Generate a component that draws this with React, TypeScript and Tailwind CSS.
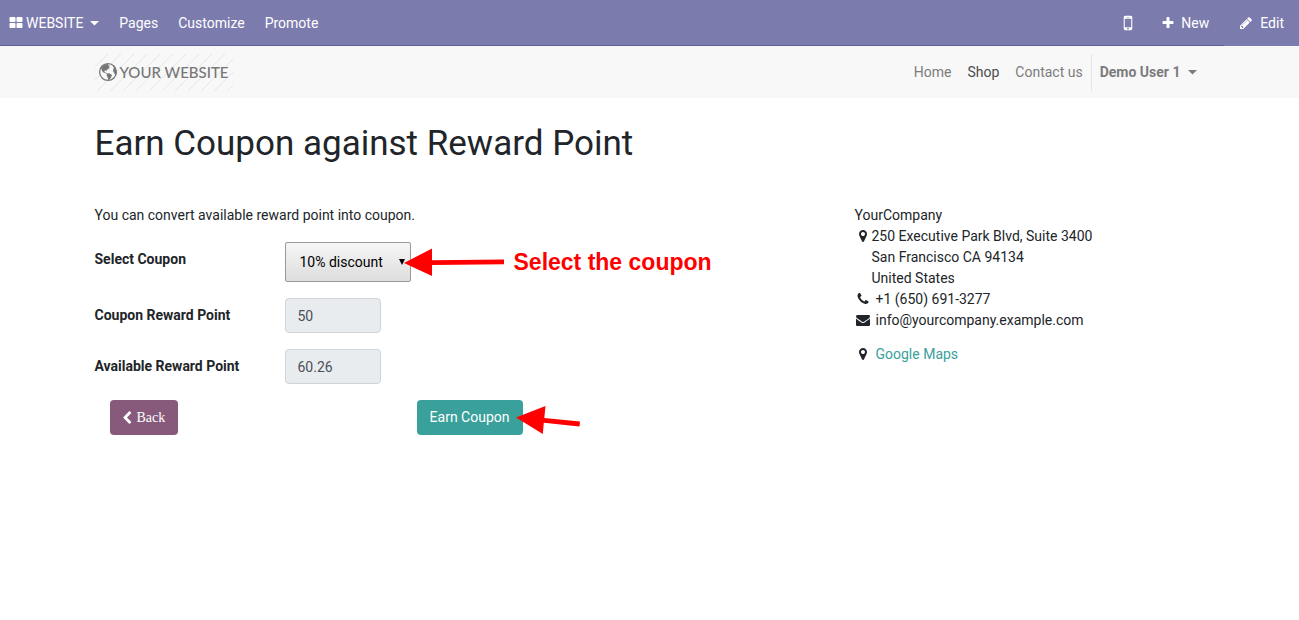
import React from "react";

const ICONS = {
  thLarge:
    "M832 1024v384q0 52-38 90t-90 38h-512q-52 0-90-38t-38-90v-384q0-52 38-90t90-38h512q52 0 90 38t38 90zm0-768v384q0 52-38 90t-90 38h-512q-52 0-90-38t-38-90v-384q0-52 38-90t90-38h512q52 0 90 38t38 90zm896 768v384q0 52-38 90t-90 38h-512q-52 0-90-38t-38-90v-384q0-52 38-90t90-38h512q52 0 90 38t38 90zm0-768v384q0 52-38 90t-90 38h-512q-52 0-90-38t-38-90v-384q0-52 38-90t90-38h512q52 0 90 38t38 90z",
  mobile:
    "M976 1408q0-33-23.5-56.5t-56.5-23.5-56.5 23.5-23.5 56.5 23.5 56.5 56.5 23.5 56.5-23.5 23.5-56.5zm208-160v-704q0-13-9.5-22.5t-22.5-9.5h-512q-13 0-22.5 9.5t-9.5 22.5v704q0 13 9.5 22.5t22.5 9.5h512q13 0 22.5-9.5t9.5-22.5zm-192-848q0-16-16-16h-160q-16 0-16 16t16 16h160q16 0 16-16zm288-16v1024q0 52-38 90t-90 38h-512q-52 0-90-38t-38-90v-1024q0-52 38-90t90-38h512q52 0 90 38t38 90z",
  plus: "M1600 736v192q0 40-28 68t-68 28h-416v416q0 40-28 68t-68 28h-192q-40 0-68-28t-28-68v-416h-416q-40 0-68-28t-28-68v-192q0-40 28-68t68-28h416v-416q0-40 28-68t68-28h192q40 0 68 28t28 68v416h416q40 0 68 28t28 68z",
  pencil:
    "M491 1536l91-91-235-235-91 91v107h128v128h107zm523-928q0-22-22-22-10 0-17 7l-542 542q-7 7-7 17 0 22 22 22 10 0 17-7l542-542q7-7 7-17zm-54-192l416 416-832 832h-416v-416zm683 96q0 53-37 90l-166 166-416-416 166-165q36-38 90-38 53 0 91 38l235 234q37 39 37 91z",
  marker:
    "M1152 640q0-106-75-181t-181-75-181 75-75 181 75 181 181 75 181-75 75-181zm256 0q0 109-33 179l-364 774q-16 33-47.5 52t-67.5 19-67.5-19-46.5-52l-365-774q-33-70-33-179 0-212 150-362t362-150 362 150 150 362z",
  phone:
    "M1600 1240q0 27-10 70.5t-21 68.5q-21 50-122 106-94 51-186 51-27 0-53-3.5t-57.5-12.5-47-14.5-55.5-20.5-49-18q-98-35-175-83-127-79-264-216t-216-264q-48-77-83-175-3-9-18-49t-20.5-55.5-14.5-47-12.5-57.5-3.5-53q0-92 51-186 56-101 106-122 25-11 68.5-21t70.5-10q14 0 21 3 18 6 53 76 11 19 30 54t35 63.5 31 53.5q3 4 17.5 25t21.5 35.5 7 28.5q0 20-28.5 50t-62 55-62 53-28.5 46q0 9 5 22.5t8.5 20.5 14 24 11.5 19q76 137 174 235t235 174q2 1 19 11.5t24 14 20.5 8.5 22.5 5q18 0 46-28.5t53-62 55-62 50-28.5q14 0 28.5 7t35.5 21.5 25 17.5q25 15 53.5 31t63.5 35 54 30q70 35 76 53 3 7 3 21z",
  envelope:
    "M1792 710v794q0 66-47 113t-113 47h-1472q-66 0-113-47t-47-113v-794q44 49 101 87 362 246 497 345 57 42 92.5 65.5t94.5 48 110 24.5h2q51 0 110-24.5t94.5-48 92.5-65.5q170-123 498-345 57-39 100-87zm0-294q0 79-49 151t-122 123q-376 261-468 325-10 7-42.5 31t-54 38.5-52 32.5-57.5 27-50 9h-2q-23 0-50-9t-57.5-27-52-32.5-54-38.5-42.5-31q-91-64-262-182.5t-205-142.5q-62-42-117-115.5t-55-136.5q0-78 41.5-130t118.5-52h1472q65 0 112.5 47t47.5 113z",
  chevronLeft:
    "M1427 301l-531 531 531 531q19 19 19 45t-19 45l-166 166q-19 19-45 19t-45-19l-742-742q-19-19-19-45t19-45l742-742q19-19 45-19t45 19l166 166q19 19 19 45t-19 45z",
};

function Icon({ name, className = "size-3.5" }: { name: keyof typeof ICONS; className?: string }) {
  return (
    <svg viewBox="0 0 1792 1792" fill="currentColor" aria-hidden="true" className={`shrink-0 ${className}`}>
      <path d={ICONS[name]} />
    </svg>
  );
}

function Caret() {
  return (
    <svg viewBox="0 0 9 5" fill="currentColor" aria-hidden="true" className="h-[5px] w-[9px] shrink-0">
      <path d="M0 0h9L4.5 4.6z" />
    </svg>
  );
}

function AdminBar() {
  return (
    <nav className="flex h-[46px] justify-between bg-[#7c7bad] text-white">
      <div className="flex grow items-center border-b border-[#5f5e97] pt-px">
        <button className="flex items-center pr-2.5 pl-[9px]">
          <Icon name="thLarge" className="mr-[3px] size-3.5" />
          WEBSITE
          <span className="ml-[7px]">
            <Caret />
          </span>
        </button>
        <a href="#pages" className="px-2.5">Pages</a>
        <a href="#customize" className="px-2.5">Customize</a>
        <a href="#promote" className="px-2.5">Promote</a>
        <div className="ml-auto flex items-center">
          <button aria-label="Mobile preview" className="px-2">
            <Icon name="mobile" className="size-5" />
          </button>
          <button className="flex items-center gap-1.5 px-[15px]">
            <Icon name="plus" />
            New
          </button>
        </div>
      </div>
      <button className="flex items-center gap-[7px] px-[15px]">
        <Icon name="pencil" />
        Edit
      </button>
    </nav>
  );
}

function Logo() {
  return (
    <a href="#home" className="relative flex h-[37px] w-[138px] items-center pl-[3px]">
      <svg viewBox="0 0 138 37" aria-hidden="true" className="absolute inset-0 size-full">
        <defs>
          <pattern id="hatch" width="13" height="13" patternUnits="userSpaceOnUse">
            <path d="M-1 14L14 -1" stroke="#e6e6e6" strokeWidth="1" />
          </pattern>
        </defs>
        <rect width="138" height="37" fill="url(#hatch)" />
      </svg>
      <svg viewBox="0 0 20 20" aria-hidden="true" className="relative mr-0.5 size-5 shrink-0" fill="#777777">
        <circle cx="10" cy="10" r="8.4" fill="#f8f8f8" stroke="#777777" strokeWidth="1.3" />
        <path d="M3 5.8L6 2.8 10.3 1.8 9.8 3.3 11.8 3.6 10.8 5 12 5.8 9.6 7.3 8.4 8.9 7.8 8.2 6.2 9.1 7.2 10.4 8.8 10.9 9.3 12 7.5 11.3 5 10.2 3.7 8.2z" />
        <path d="M9 11.4L11.4 11.3 14 13 13.2 15.3 11.3 17.8 10.3 18.2 9.7 15.4 8.6 13.4z" />
        <path d="M14.7 3.6L16.8 4.9 18.4 8.4 18.3 12.3 17.2 13.6 16.4 11.2 15.3 9.8 15.1 7.4 16 5.9z" />
      </svg>
      <span className="relative font-['Lato',sans-serif] text-[15px] font-medium whitespace-nowrap text-[#777777]">
        YOUR WEBSITE
      </span>
    </a>
  );
}

function SiteHeader() {
  return (
    <header className="bg-[#f8f8f8]">
      <div className="mx-auto flex h-[52px] max-w-[1140px] items-center justify-between px-[15px]">
        <Logo />
        <nav className="flex items-center text-[#7c7c7c]">
          <a href="#home" className="px-2">Home</a>
          <a href="#shop" className="px-2 text-[#4b4b4b]">Shop</a>
          <a href="#contact" className="px-2">Contact us</a>
          <button className="flex h-[37px] items-center gap-[7px] border-l border-[#e6e6e6] px-2 font-bold">
            Demo User 1
            <Caret />
          </button>
        </nav>
      </div>
    </header>
  );
}

function Field({ id, label, value }: { id: string; label: string; value: string }) {
  return (
    <div className="flex items-start">
      <label htmlFor={id} className="w-[190px] pt-[7px] font-bold">
        {label}
      </label>
      <input
        id={id}
        readOnly
        defaultValue={value}
        className="h-[35px] w-24 rounded-sm border border-[#ced4da] bg-[#e9ecef] px-3 text-[#495057]"
      />
    </div>
  );
}

function CouponForm() {
  return (
    <form className="flex flex-col gap-4" onSubmit={(e) => e.preventDefault()}>
      <div className="flex items-start">
        <label htmlFor="coupon" className="w-[190px] pt-[7px] font-bold">
          Select Coupon
        </label>
        <div className="relative">
          <select
            id="coupon"
            className="h-10 w-[126px] appearance-none rounded-xs border border-[#999999] bg-linear-to-b from-[#f6f6f6] to-[#dddddd] px-3.5 text-black"
          >
            <option>10% discount</option>
          </select>
          <svg viewBox="0 0 6 6" aria-hidden="true" className="pointer-events-none absolute top-[17px] right-1.5 size-1.5">
            <path d="M0 0h6L3 6z" />
          </svg>
          <div className="pointer-events-none absolute top-1.5 left-[119px] flex items-center gap-2.5 whitespace-nowrap text-[#ff0000]">
            <svg viewBox="0 0 100 28" fill="currentColor" aria-hidden="true" className="h-7 w-[100px]">
              <path d="M0 15L28 0.5V12.2L100 11.4V16.2L28 17V28z" />
            </svg>
            <span className="font-['Liberation_Sans',Arial,sans-serif] text-[23px] leading-7 font-bold">
              Select the coupon
            </span>
          </div>
        </div>
      </div>
      <Field id="coupon-points" label="Coupon Reward Point" value="50" />
      <Field id="available-points" label="Available Reward Point" value="60.26" />
      <div className="flex w-[428px] justify-between pl-[15px]">
        <button
          type="button"
          className="flex h-[35px] items-center gap-[3px] rounded-sm bg-[#875a7b] pr-[13px] pl-2.5 font-['Liberation_Serif',serif] text-white"
        >
          <Icon name="chevronLeft" />
          Back
        </button>
        <div className="relative">
          <button type="submit" className="h-[35px] rounded-sm bg-[#3aa09b] px-[13px] text-white">
            Earn Coupon
          </button>
          <svg
            viewBox="0 0 64 28"
            fill="#ff0000"
            aria-hidden="true"
            className="pointer-events-none absolute top-1.5 left-[99px] h-7 w-16"
          >
            <path d="M0 11.5L29.5 0L28.3 11.9L64 15.4L63.5 20.4L27.8 16.8L26.8 28z" />
          </svg>
        </div>
      </div>
    </form>
  );
}

function CompanyAddress() {
  return (
    <address className="not-italic">
      <p>YourCompany</p>
      <div className="flex">
        <Icon name="marker" className="mt-[3px] mr-0.5 ml-px size-3.5" />
        <p>
          250 Executive Park Blvd, Suite 3400
          <br />
          San Francisco CA 94134
          <br />
          United States
        </p>
      </div>
      <p className="flex gap-1">
        <Icon name="phone" className="mt-[3px] mr-0.5 ml-px size-3.5" />
        +1 (650) 691-3277
      </p>
      <p className="flex gap-1">
        <Icon name="envelope" className="mt-[3px] mr-0.5 ml-px size-3.5" />
        info@yourcompany.example.com
      </p>
      <p className="mt-[13px] flex gap-1">
        <Icon name="marker" className="mt-[3px] mr-0.5 ml-px size-3.5" />
        <a href="#map" className="text-[#3aa09b]">
          Google Maps
        </a>
      </p>
    </address>
  );
}

export default function App() {
  return (
    <div className="min-h-screen bg-white font-['Roboto',sans-serif] text-[14px] leading-[21px] text-[#212529]">
      <AdminBar />
      <SiteHeader />
      <main className="mx-auto max-w-[1140px] px-[15px] pt-[25px]">
        <h1 className="text-[35px] leading-[42px]">Earn Coupon against Reward Point</h1>
        <div className="mt-10 grid grid-cols-3">
          <section className="col-span-2 pr-[30px]">
            <p className="mb-4">You can convert available reward point into coupon.</p>
            <CouponForm />
          </section>
          <aside className="pl-5">
            <CompanyAddress />
          </aside>
        </div>
      </main>
    </div>
  );
}
